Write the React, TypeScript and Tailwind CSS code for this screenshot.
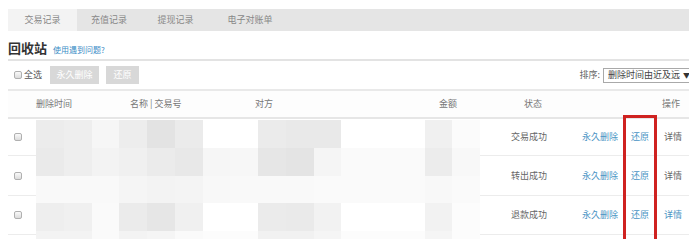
import React from "react";

const mosaic: string[][] = [
  ["bg-[#ececec]","bg-[#eeeeee]","bg-[#f6f6f6]","bg-[#ededed]","bg-[#e3e3e3]","bg-[#ebebeb]","bg-[#ffffff]","bg-[#ffffff]","bg-[#ebebeb]","bg-[#e9e9e9]","bg-[#e9e9e9]","bg-[#ffffff]","bg-[#ffffff]","bg-[#ffffff]","bg-[#f0f0f0]","bg-[#fbfbfb]"],
  ["bg-[#eaeaea]","bg-[#eeeeee]","bg-[#f3f3f3]","bg-[#f0f0f0]","bg-[#ebebeb]","bg-[#e8e8e8]","bg-[#f6f6f6]","bg-[#f7f7f7]","bg-[#e6e6e6]","bg-[#e4e4e4]","bg-[#f5f5f5]","bg-[#fafafa]","bg-[#fafafa]","bg-[#fafafa]","bg-[#ececec]","bg-[#f8f8f8]"],
  ["bg-[#f9f9f9]","bg-[#f9f9f9]","bg-[#f9f9f9]","bg-[#f5f5f5]","bg-[#f3f3f3]","bg-[#f4f4f4]","bg-[#f8f8f8]","bg-[#f9f9f9]","bg-[#f9f9f9]","bg-[#f9f9f9]","bg-[#fafafa]","bg-[#fafafa]","bg-[#fafafa]","bg-[#fafafa]","bg-[#f8f8f8]","bg-[#fafafa]"],
  ["bg-[#eeeeee]","bg-[#f0f0f0]","bg-[#fafafa]","bg-[#ebebeb]","bg-[#e6e6e6]","bg-[#f0f0f0]","bg-[#ffffff]","bg-[#ffffff]","bg-[#ebebeb]","bg-[#eaeaea]","bg-[#f2f2f2]","bg-[#ffffff]","bg-[#ffffff]","bg-[#ffffff]","bg-[#f2f2f2]","bg-[#fcfcfc]"],
  ["bg-[#f3f3f3]","bg-[#f3f3f3]","bg-[#fafafa]","bg-[#f3f3f3]","bg-[#f5f5f5]","bg-[#fafafa]","bg-[#fcfcfc]","bg-[#fcfcfc]","bg-[#f1f1f1]","bg-[#f1f1f1]","bg-[#f5f5f5]","bg-[#fcfcfc]","bg-[#fcfcfc]","bg-[#fcfcfc]","bg-[#f5f5f5]","bg-[#fcfcfc]"],
];

function Box() {
  return <span className="block w-[8px] h-[8px] border border-[#b0b0b0] rounded-[2px] bg-gradient-to-b from-[#fafafa] to-[#dcdcdc]" />;
}

const rows = [
  { status: "交易成功", h: "h-[37px]", detailBlue: false },
  { status: "转出成功", h: "h-[40px]", detailBlue: false },
  { status: "退款成功", h: "h-[39px]", detailBlue: true },
  { status: "", h: "h-[10px]", detailBlue: false },
];

export default function App() {
  return (
    <div className="relative w-[689px] h-[239px] overflow-hidden bg-white pl-2 pt-[9px] font-['Noto_Sans_CJK_SC',sans-serif] text-[9px] text-[#666] whitespace-nowrap">
      {/* tabs */}
      <div className="flex h-[22px] bg-[#e5e5e5] text-[#888] leading-[22px]">
        <div className="w-[69px] bg-[#f3f3f3] text-center">交易记录</div>
        <div className="w-[64px] text-center">充值记录</div>
        <div className="w-[69px] text-center">提现记录</div>
        <div className="w-[80px] text-center">电子对账单</div>
      </div>
      {/* title */}
      <div className="flex items-baseline h-[28px] pt-[10px] gap-[6px]">
        <span className="text-[13px] leading-[14px] font-bold text-[#333]">回收站</span>
        <span className="text-[8px] text-[#3a8cc6]">使用遇到问题?</span>
      </div>
      <div className="h-[2px] bg-[#e3e3e3]" />
      {/* toolbar */}
      <div className="flex items-center h-[28px]">
        <div className="flex items-center pl-[6px] gap-[2px]">
          <Box />
          <span className="text-[#555]">全选</span>
        </div>
        <div className="ml-[8px] w-[49px] h-[18px] bg-[#d8d8d8] text-white text-center leading-[18px]">永久删除</div>
        <div className="ml-[7px] w-[33px] h-[18px] bg-[#d8d8d8] text-white text-center leading-[18px]">还原</div>
        <div className="flex-1" />
        <span className="text-[#666] mr-[3px]">排序:</span>
        <div className="flex shrink-0 items-center gap-[3px] w-[90px] -mr-[4px] h-[15px] border border-[#a9a9a9] pl-[4px] text-[#444]">
          <span>删除时间由近及远</span>
          <span className="text-[7px] text-[#333]">▼</span>
        </div>
      </div>
      <div className="h-[2px] bg-[#e9e9e9]" />
      {/* header */}
      <div className="flex items-center h-[26px] text-[#777] bg-[#fdfdfd]">
        <div className="w-[28px]" />
        <div className="w-[94px]">删除时间</div>
        <div className="w-[125px]">名称 | 交易号</div>
        <div className="w-[184px]">对方</div>
        <div className="w-[85px]">金额</div>
        <div className="w-[138px]">状态</div>
        <div>操作</div>
      </div>
      <div className="h-[2px] bg-[#e6e6e6]" />
      {/* rows */}
      {rows.map((r, i) => (
        <div key={i} className={`flex items-center ${r.h} border-b border-[#ececec]`}>
          <div className="w-[28px] pl-[6px]">{r.status && <Box />}</div>
          <div className="w-[475px]" />
          <div className="w-[71px] text-[#666]">{r.status}</div>
          <div className="w-[49px] text-[#4a94c4]">{r.status && "永久删除"}</div>
          <div className="w-[33px] text-[#4a94c4]">{r.status && "还原"}</div>
          <div className={r.detailBlue ? "text-[#4a94c4]" : "text-[#666]"}>{r.status && "详情"}</div>
        </div>
      ))}
      {/* mosaic blur over private data */}
      <div className="absolute left-[36px] top-[120px] w-[444px] grid grid-cols-16 grid-rows-[repeat(5,27.75px)]">
        {mosaic.flat().map((c, i) => (
          <div key={i} className={c} />
        ))}
      </div>
      {/* red highlight annotation */}
      <div className="absolute left-[623px] top-[115px] w-[34px] h-[140px] border-[3px] border-[#cf2220]" />
    </div>
  );
}
